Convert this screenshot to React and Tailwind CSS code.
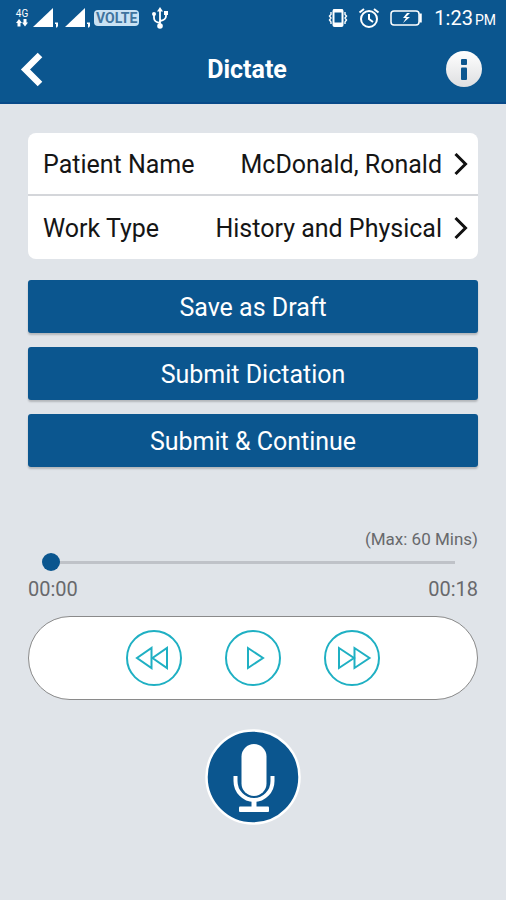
import React, { useState } from "react";

const details = [
  { label: "Patient Name", value: "McDonald, Ronald" },
  { label: "Work Type", value: "History and Physical" },
];

const actions = ["Save as Draft", "Submit Dictation", "Submit & Continue"];

// cellular signal triangle with its little SIM marker
function Signal() {
  return (
    <svg className="h-5 w-7" viewBox="0 0 28 20" fill="#fff" aria-hidden="true">
      <path d="M1 19 21 0V19Z" />
      <path d="M23 14.500h3V18l-1 1.500h-1V16h-1Z" />
    </svg>
  );
}

function StatusBar() {
  return (
    <div className="flex h-9 items-center justify-between pl-3 pr-2.5 text-white">
      <div className="flex items-center">
        <div className="flex w-5 flex-col items-center">
          <span className="text-[10px] leading-[10px]">4G</span>
          <svg className="h-2 w-4" viewBox="0 0 16 8" fill="#fff" aria-hidden="true">
            <path d="M5 0 8 4H6.500V7.500h-3V4H2Z" />
            <path d="M11 7.500 8 3.500h1.500V0h3v3.500H14Z" />
          </svg>
        </div>
        <div className="flex gap-1">
          <Signal />
          <Signal />
        </div>
        <span className="ml-0.5 rounded-sm bg-[#c9e2f4] px-0.5 text-sm font-bold leading-4 text-[#3f749f]">
          VOLTE
        </span>
        <svg
          className="ml-3 h-6 w-[18px]"
          viewBox="0 0 18 24"
          fill="none"
          stroke="#fff"
          strokeWidth="1.800"
          aria-hidden="true"
        >
          <path d="M9 3V20M9 17Q3 16 3 12V8M9 15q6-1 6-5V7" />
          <path d="M9 1l3 4.500H6Z" fill="#fff" stroke="none" />
          <circle cx="9" cy="20" r="2.800" fill="#fff" stroke="none" />
          <circle cx="3" cy="8" r="2" fill="#fff" stroke="none" />
          <path d="M13 5h4v4h-4Z" fill="#fff" stroke="none" />
        </svg>
      </div>

      <div className="flex items-center">
        {/* vibrate */}
        <svg className="h-5 w-5" viewBox="0 0 20 20" fill="none" stroke="#fff" strokeWidth="1.400" aria-hidden="true">
          <rect x="5.500" y="2" width="9" height="16" rx="1" strokeWidth="2" />
          <path d="M5 16h10M5 3h10" strokeWidth="3" />
          <path d="M3 4v2.500L1.500 8 3 10l-1.500 2L3 14v2M17 4v2.500L18.500 8 17 10l1.500 2-1.500 2v2" />
        </svg>
        {/* alarm */}
        <svg className="ml-2.5 h-[22px] w-[22px]" viewBox="0 0 22 22" fill="none" stroke="#fff" strokeWidth="2" aria-hidden="true">
          <circle cx="11" cy="12" r="8" />
          <path d="M11 7v5l4 3M1.500 5.500 6 2M20.500 5.500 16 2" />
        </svg>
        {/* battery */}
        <svg className="ml-2.5 h-4 w-8" viewBox="0 0 32 16" fill="none" stroke="#fff" strokeWidth="1.500" aria-hidden="true">
          <rect x="1" y="1" width="28" height="14" rx="3" />
          <path d="M30.500 3.500v9" strokeWidth="2.500" />
          <path d="M17 3l-4 5h3l-3 5 7-6h-4l4-4Z" fill="#fff" stroke="none" />
        </svg>
        <span className="ml-3 text-xl leading-6">1:23</span>
        <span className="ml-0.5 pt-1 text-sm leading-5">PM</span>
      </div>
    </div>
  );
}

function RoundButton({ label, children }) {
  return (
    <button type="button" aria-label={label} className="h-14 w-14">
      <svg
        className="h-14 w-14"
        viewBox="0 0 56 56"
        fill="none"
        stroke="#1fb0c3"
        strokeWidth="2"
        aria-hidden="true"
      >
        <circle cx="28" cy="28" r="27" />
        {children}
      </svg>
    </button>
  );
}

export default function App() {
  const [position, setPosition] = useState(0);

  return (
    <div className="min-h-screen bg-[#e0e4e9] font-[Roboto,sans-serif]">
      <header className="border-b-2 border-[#084a89] bg-[#0b568f]">
        <StatusBar />
        <div className="flex h-[66px] items-center justify-between pl-5 pr-6">
          <button type="button" aria-label="Back" className="h-9 w-7">
            <svg className="h-9 w-6" viewBox="0 0 24 36" fill="none" stroke="#fff" strokeWidth="6.500" aria-hidden="true">
              <path d="M20 4 5.500 18.500 20 33" />
            </svg>
          </button>
          <h1 className="pt-0.5 text-[25px] font-bold text-white">Dictate</h1>
          <button type="button" aria-label="Information" className="h-9 w-9">
            <svg className="h-9 w-9" viewBox="0 0 36 36" aria-hidden="true">
              <defs>
                <linearGradient id="info" x1="0" y1="0" x2="0" y2="1">
                  <stop offset="0" stopColor="#fff" />
                  <stop offset="1" stopColor="#dedfe1" />
                </linearGradient>
              </defs>
              <circle cx="18" cy="18" r="18" fill="url(#info)" />
              <rect x="15" y="8" width="6" height="6" rx="1" fill="#0b568f" />
              <rect x="15" y="16.500" width="6" height="12.500" rx="1" fill="#0b568f" />
            </svg>
          </button>
        </div>
      </header>

      <main className="px-7 pt-[29px]">
        <div className="divide-y-2 divide-[#d4d6da] overflow-hidden rounded-lg bg-white">
          {details.map((item) => (
            <button
              key={item.label}
              type="button"
              className="flex h-[63px] w-full items-center justify-between pl-[15px] pr-2.5 pt-[3px] text-[25px] text-[#151515]"
            >
              <span>{item.label}</span>
              <span className="flex items-center gap-3">
                {item.value}
                <svg className="h-6 w-3.5" viewBox="0 0 14 24" fill="none" stroke="#111" strokeWidth="3" aria-hidden="true">
                  <path d="M1.500 1 11.500 11 1.500 21" />
                </svg>
              </span>
            </button>
          ))}
        </div>

        <div className="mt-[21px] flex flex-col gap-3.5">
          {actions.map((label) => (
            <button
              key={label}
              type="button"
              className="h-[53px] rounded-[3px] bg-[#0b568f] pt-0.5 text-[25px] text-white shadow-[0_2px_2px_rgba(0,0,0,0.2)]"
            >
              {label}
            </button>
          ))}
        </div>

        <div className="mt-[62px] text-[#68696c]">
          <p className="text-right text-[17px] leading-5">(Max: 60 Mins)</p>
          <div className="flex h-[26px] items-center px-3.5">
            <input
              type="range"
              aria-label="Playback position"
              min="0"
              max="18"
              value={position}
              onChange={(e) => setPosition(Number(e.target.value))}
              className="h-[18px] w-full appearance-none bg-[linear-gradient(#bfc2c8,#bfc2c8)] bg-[length:calc(100%-18px)_3px] bg-center bg-no-repeat [&::-webkit-slider-thumb]:h-[18px] [&::-webkit-slider-thumb]:w-[18px] [&::-webkit-slider-thumb]:appearance-none [&::-webkit-slider-thumb]:rounded-full [&::-webkit-slider-thumb]:bg-[#0b568f]"
            />
          </div>
          <div className="flex justify-between text-xl leading-7">
            <span>00:00</span>
            <span>00:18</span>
          </div>
        </div>

        <div className="mt-[13px] flex h-[84px] items-center justify-center gap-[43px] rounded-full border border-[#8a8a8a] bg-white">
          <RoundButton label="Rewind">
            <path d="M25.500 18v20L11 28Z" />
            <path d="M41 18v20L26.500 28Z" />
          </RoundButton>
          <RoundButton label="Play">
            <path d="M23 18v20L38 28Z" />
          </RoundButton>
          <RoundButton label="Fast forward">
            <path d="M15 18v20L30 28Z" />
            <path d="M30.500 18v20L45.500 28Z" />
          </RoundButton>
        </div>

        <div className="mt-[29px] flex justify-center pb-7">
          <button type="button" aria-label="Record" className="h-24 w-24">
            <svg className="h-24 w-24" viewBox="0 0 96 96" fill="none" aria-hidden="true">
              <circle cx="48" cy="48" r="46.500" fill="#0b568f" stroke="#fff" strokeWidth="2.500" />
              <rect x="36.500" y="15" width="25" height="52" rx="12.500" fill="#fff" />
              <path d="M30.500 47v5a18.500 19 0 0 0 37 0v-5" stroke="#fff" strokeWidth="4" />
              <path d="M49 71v8" stroke="#fff" strokeWidth="5" />
              <rect x="34" y="77.500" width="30" height="5.500" rx="1" fill="#fff" />
            </svg>
          </button>
        </div>
      </main>
    </div>
  );
}
